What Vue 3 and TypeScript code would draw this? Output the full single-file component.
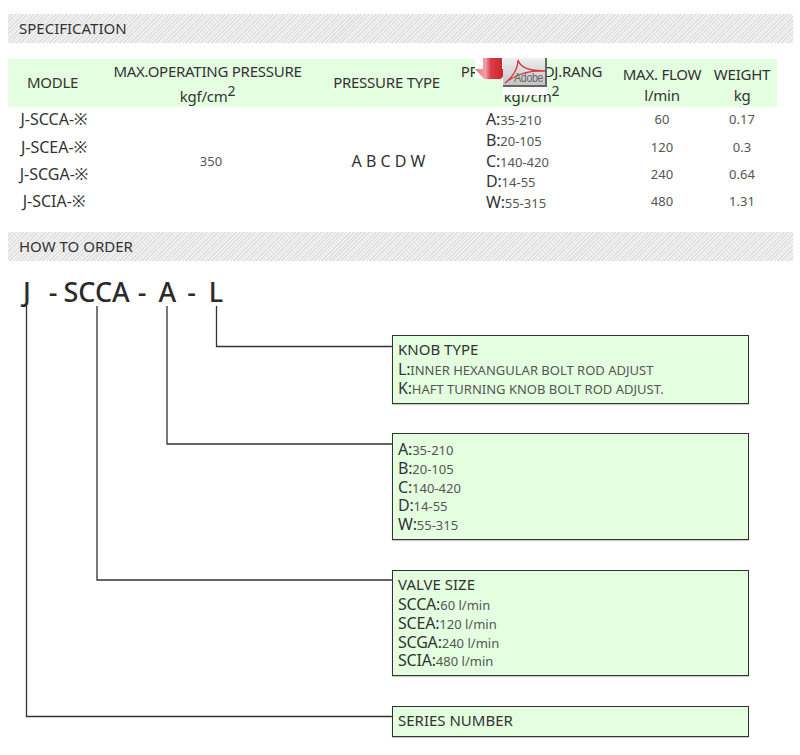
<script setup lang="ts">
interface SpecRow { model: string; flow: string; weight: string }
const rows: SpecRow[] = [
  { model: 'J-SCCA-※', flow: '60', weight: '0.17' },
  { model: 'J-SCEA-※', flow: '120', weight: '0.3' },
  { model: 'J-SCGA-※', flow: '240', weight: '0.64' },
  { model: 'J-SCIA-※', flow: '480', weight: '1.31' },
]
const ranges = [
  ['A:', '35-210'],
  ['B:', '20-105'],
  ['C:', '140-420'],
  ['D:', '14-55'],
  ['W:', '55-315'],
]
const knobs = [
  ['L:', 'INNER HEXANGULAR BOLT ROD ADJUST'],
  ['K:', 'HAFT TURNING KNOB BOLT ROD ADJUST.'],
]
const sizes = [
  ['SCCA:', '60 l/min'],
  ['SCEA:', '120 l/min'],
  ['SCGA:', '240 l/min'],
  ['SCIA:', '480 l/min'],
]
</script>

<template>
  <div class="page">
    <div class="bar">SPECIFICATION</div>

    <div class="spec">
      <div class="head">
        <div class="h single">MODLE</div>
        <div class="h double"><span>MAX.OPERATING PRESSURE</span><span>kgf/cm<sup>2</sup></span></div>
        <div class="h single">PRESSURE TYPE</div>
        <div class="h double"><span>PRESSURE ADJ.RANG</span><span>kgf/cm<sup>2</sup></span></div>
        <div class="h tight flow"><span>MAX. FLOW</span><span>l/min</span></div>
        <div class="h tight last"><span>WEIGHT</span><span>kg</span></div>
      </div>
      <div class="body">
        <div class="col models">
          <div v-for="r in rows" :key="r.model">{{ r.model }}</div>
        </div>
        <div class="col small pressure">350</div>
        <div class="col letters">A B C D W</div>
        <div class="col ranges">
          <div v-for="r in ranges" :key="r[0]"><span class="k">{{ r[0] }}</span><span class="v">{{ r[1] }}</span></div>
        </div>
        <div class="col small rows4 flow">
          <div v-for="r in rows" :key="r.flow">{{ r.flow }}</div>
        </div>
        <div class="col small rows4 last">
          <div v-for="r in rows" :key="r.weight">{{ r.weight }}</div>
        </div>
      </div>

      <div class="adobe">
        <svg class="arrow" width="28" height="21" viewBox="0 0 28 21">
          <defs>
            <linearGradient id="redGrad" x1="0" y1="0" x2="1" y2="0">
              <stop offset="0" stop-color="#e87a80" />
              <stop offset="0.3" stop-color="#eda0a4" />
              <stop offset="0.45" stop-color="#dc3c48" />
              <stop offset="0.8" stop-color="#c9252f" />
            </linearGradient>
          </defs>
          <rect width="28" height="21" fill="#fff" />
          <path d="M8 0H27V11H35L17.5 30L0 11H8Z" fill="url(#redGrad)" />
        </svg>
        <div class="badge">
          <div class="plate">
            <svg class="swoosh" width="44" height="28" viewBox="0 0 44 28">
              <path d="M2 25C9 20 15 11 15 2C17 9 27 13 42 13C30 12 14 15 2 25Z" fill="none" stroke="#d8323c" stroke-width="1.3" />
            </svg>
            <span class="adobe-text">Adobe</span>
          </div>
        </div>
      </div>
    </div>

    <div class="bar">HOW TO ORDER</div>

    <div class="order">
      <div class="code">
        <span class="c-j">J</span><span class="c-d1">-</span><span class="c-s">SCCA</span><span class="c-d2">-</span><span class="c-a">A</span><span class="c-d3">-</span><span class="c-l">L</span>
      </div>

      <div class="boxes">
        <div class="box b1">
          <div class="title">KNOB TYPE</div>
          <div v-for="k in knobs" :key="k[0]" class="line"><span class="k">{{ k[0] }}</span><span class="v">{{ k[1] }}</span></div>
        </div>
        <div class="box b2">
          <div v-for="r in ranges" :key="r[0]" class="line"><span class="k">{{ r[0] }}</span><span class="v">{{ r[1] }}</span></div>
        </div>
        <div class="box b3">
          <div class="title">VALVE SIZE</div>
          <div v-for="s in sizes" :key="s[0]" class="line"><span class="k">{{ s[0] }}</span><span class="v">{{ s[1] }}</span></div>
        </div>
        <div class="box b4">
          <div class="title">SERIES NUMBER</div>
        </div>
      </div>

      <svg class="wires" width="800" height="494" viewBox="0 0 800 494">
        <g fill="none" stroke="#333" stroke-width="1.3">
          <path d="M216.5 45V85.5H392" />
          <path d="M167 45V183H392" />
          <path d="M97 45V319H392" />
          <path d="M26.5 45V455.5H392" />
        </g>
      </svg>
    </div>
  </div>
</template>

<style>
html, body { background: #fff; }
</style>

<style scoped>
.page {
  width: 800px;
  height: 755px;
  padding-top: 14px;
  box-sizing: border-box;
  overflow: hidden;
  font-family: "Noto Sans", "Noto Sans CJK SC", sans-serif;
  color: #333;
  position: relative;
}
.bar {
  margin-left: 8px;
  width: 785px;
  height: 29px;
  box-sizing: border-box;
  padding-left: 11px;
  line-height: 29px;
  font-size: 15px;
  background: repeating-linear-gradient(135deg, #dedede 0, #dedede 1.2px, #f3f3f3 1.2px, #f3f3f3 2.6px);
}
.spec {
  position: relative;
  margin: 16px 0 0 8px;
  width: 769px;
  height: 173px;
}
.head {
  display: grid;
  grid-template-columns: 89px 221px 137px 153px 90px 79px;
  height: 48px;
  background: #e4ffe0;
  font-size: 15px;
  letter-spacing: -0.25px;
}
.h {
  display: flex;
  flex-direction: column;
  align-items: center;
  justify-content: center;
  line-height: 24px;
  text-align: center;
  white-space: nowrap;
}
.h sup { font-size: 14px; line-height: 0; }
.single { padding-bottom: 5px; }
.double { line-height: 25px; padding-bottom: 1px; }
.tight { line-height: 21px; }
.flow { padding-left: 18px; }
.last { padding-left: 9px; }
.body {
  display: grid;
  grid-template-columns: 89px 221px 137px 153px 90px 79px;
  height: 109px;
  font-size: 15px;
}
.col {
  display: flex;
  flex-direction: column;
  align-items: center;
  justify-content: center;
  white-space: nowrap;
}
.models { justify-content: flex-start; padding-left: 3px; margin-top: -0.8px; font-size: 16px; }
.models div { height: 27.4px; line-height: 27px; }
.small { font-size: 13px; color: #555; }
.pressure { padding-left: 7px; margin-top: -1px; }
.letters { font-size: 16px; padding-left: 4px; margin-top: -1px; }
.ranges {
  align-items: flex-start;
  justify-content: flex-start;
  padding-left: 31px;
  padding-top: 2px;
}
.ranges div { height: 20.8px; line-height: 20.8px; }
.rows4 { justify-content: flex-start; margin-top: -0.8px; }
.rows4 div { height: 27.4px; line-height: 27px; }
.k { font-size: 16px; letter-spacing: -0.2px; }
.v { font-size: 13px; color: #555; }

.adobe {
  position: absolute;
  left: 467px;
  top: -1px;
  display: flex;
  align-items: flex-start;
}
.arrow { flex: none; display: block; }
.badge {
  flex: none;
  width: 44px;
  height: 37px;
  background: #fff;
}
.plate {
  position: relative;
  height: 29px;
  box-sizing: border-box;
  background: linear-gradient(#eeeeee, #c4c4c4);
  border-right: 2px solid #666;
  border-bottom: 2px solid #666;
}
.swoosh { position: absolute; left: 0; top: 0; }
.adobe-text {
  position: absolute;
  left: 11px;
  top: 12px;
  font-size: 13px;
  line-height: 15px;
  letter-spacing: -0.4px;
  color: #666;
  font-family: "Liberation Sans", sans-serif;
  transform: scaleX(0.82);
  transform-origin: left center;
}

.order {
  position: relative;
  height: 494px;
}
.code {
  font-size: 27px;
  font-weight: 500;
  line-height: 62px;
  color: #2b2b2b;
  display: flex;
  height: 74px;
}
.c-j { margin-left: 23px; }
.c-d1 { margin-left: 18px; }
.c-s { margin-left: 6px; }
.c-d2 { margin-left: 8px; }
.c-a { margin-left: 12px; }
.c-d3 { margin-left: 11px; }
.c-l { margin-left: 13px; }
.boxes {
  margin-left: 392px;
  display: flex;
  flex-direction: column;
  position: relative;
  z-index: 1;
}
.box {
  width: 357px;
  box-sizing: border-box;
  border: 1px solid #333;
  background: #e4ffe0;
  padding: 4px 5px 0;
  box-shadow: 0 1px 1px #ccc;
}
.b1 { height: 69px; }
.b2 { height: 107px; margin-top: 29px; padding-top: 6px; }
.b3 { height: 106px; margin-top: 30px; }
.b4 { height: 31px; margin-top: 30px; }
.title { font-size: 15px; line-height: 20px; margin: -1px 0 1px; }
.line { height: 18.8px; line-height: 18.8px; white-space: nowrap; }
.wires { position: absolute; left: 0; top: 0; pointer-events: none; }
</style>
